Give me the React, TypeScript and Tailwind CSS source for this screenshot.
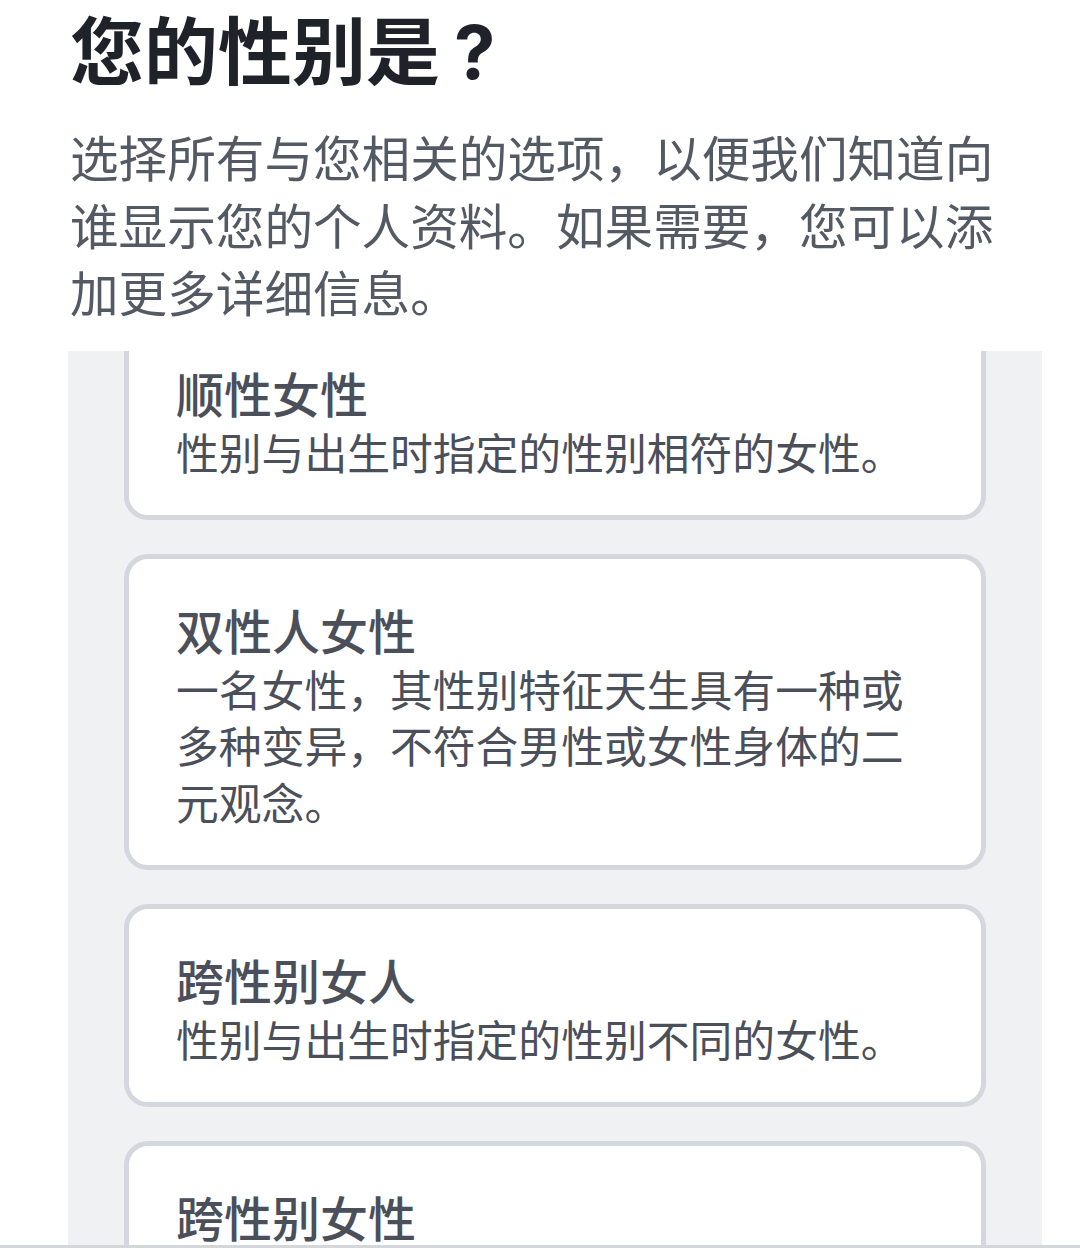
import React from "react";

const options = [
  { title: "顺性女性", desc: "性别与出生时指定的性别相符的女性。" },
  { title: "双性人女性", desc: "一名女性，其性别特征天生具有一种或多种变异，不符合男性或女性身体的二元观念。" },
  { title: "跨性别女人", desc: "性别与出生时指定的性别不同的女性。" },
  { title: "跨性别女性", desc: "性别与出生时指定的性别不同的女性。" },
];

export default function App() {
  return (
    <div
      className="h-[1248px] w-[1080px] overflow-hidden bg-white flex flex-col"
      style={{ fontFamily: '"Noto Sans CJK SC", "Noto Sans", sans-serif' }}
    >
      <div className="px-[70px] pt-[8px]">
        <h1
          className="text-[74px] leading-[89px] font-bold text-[#1f2329]"
          style={{ fontFamily: 'Inter, "Noto Sans CJK SC", sans-serif' }}
        >
          您的性别是<span className="ml-[14px]">?</span>
        </h1>
        <p className="mt-[26px] text-[48.6px] leading-[67.5px] text-[#545a64]">
          选择所有与您相关的选项，以便我们知道向谁显示您的个人资料。如果需要，您可以添加更多详细信息。
        </p>
      </div>
      <div className="flex-1 min-h-0 mt-[25px] ml-[68px] mr-[38px] bg-[#f0f1f3] overflow-hidden px-[56px]">
        <div className="-mt-[34px] flex flex-col gap-[34px]">
          {options.map((o) => (
            <div
              key={o.title}
              className="rounded-[24px] border-[5px] border-[#d4d7dd] bg-white pl-[47px] pr-[40px] pt-[39px] pb-[35.5px]"
            >
              <div className="text-[48px] leading-[62px] font-medium text-[#4a4f5a]">{o.title}</div>
              <div className="text-[42.8px] leading-[56.5px] text-[#4a4f5a]">{o.desc}</div>
            </div>
          ))}
        </div>
      </div>
      <div className="h-[3px] bg-[#d4d6da] shrink-0" />
    </div>
  );
}
